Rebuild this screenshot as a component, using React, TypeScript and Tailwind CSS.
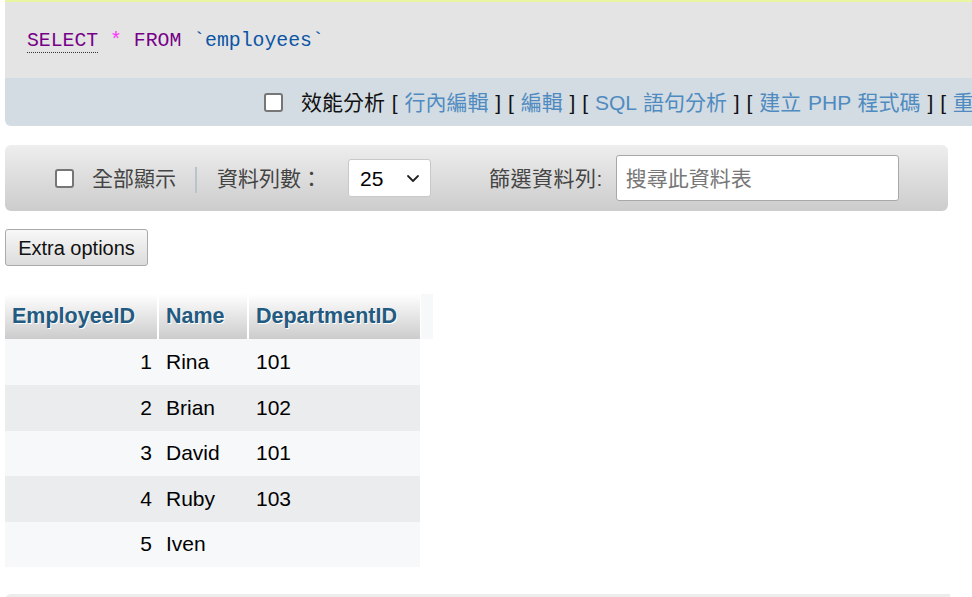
import React from "react";

const sans = { fontFamily: '"Liberation Sans", "Noto Sans CJK TC", Arial, sans-serif' };

function Box() {
  return <div className="w-[19px] h-[19px] shrink-0 rounded-[3px] border-2 border-[#767676] bg-white" />;
}

function Link({ children }: { children: React.ReactNode }) {
  return <span className="text-[#4f8bc0]">{children}</span>;
}

const rows = [
  { id: 1, name: "Rina", dep: "101", h: "h-[46px]" },
  { id: 2, name: "Brian", dep: "102", h: "h-[46px]" },
  { id: 3, name: "David", dep: "101", h: "h-[45px]" },
  { id: 4, name: "Ruby", dep: "103", h: "h-[46px]" },
  { id: 5, name: "Iven", dep: "", h: "h-[45px]" },
];

export default function App() {
  return (
    <div className="w-[972px] h-[597px] overflow-hidden bg-white pl-[5px] text-[21px] leading-none" style={sans}>
      {/* SQL panel */}
      <div className="w-[1000px] border-t-2 border-[#eaf5a2]">
        <div className="h-[76px] bg-[#e4e4e4] pl-[22px] pt-[4px] flex items-center">
          <span
            className="text-[19.8px] whitespace-pre"
            style={{ fontFamily: '"Liberation Mono", "DejaVu Sans Mono", monospace' }}
          >
            <span className="text-[#770088] underline decoration-dotted decoration-[#333] underline-offset-[6px] decoration-1">SELECT</span>
            <span> </span>
            <span className="text-[#ff33ff]">*</span>
            <span> </span>
            <span className="text-[#770088]">FROM</span>
            <span> </span>
            <span className="text-[#0b55a4]">`employees`</span>
          </span>
        </div>
        <div className="h-[48px] bg-[#d3dce3] rounded-bl-[6px] pl-[259px] flex items-center whitespace-nowrap text-[#111]">
          <Box />
          <span className="ml-[18px] whitespace-pre [word-spacing:1px]">
            效能分析 [ <Link>行內編輯</Link> ] [ <Link>編輯</Link> ] [ <Link>SQL 語句分析</Link> ] [ <Link>建立 PHP 程式碼</Link> ] [ <Link>重新整理</Link> ]
          </span>
        </div>
      </div>

      {/* Filter bar */}
      <div className="mt-[19px] w-[943px] h-[66px] rounded-[6px] bg-gradient-to-b from-[#eeeeee] to-[#cccccc] flex items-center pl-[50px] text-[#444] whitespace-nowrap">
        <Box />
        <span className="ml-[18px]">全部顯示</span>
        <span className="ml-[19px] w-[2px] h-[26px] bg-[#b8c4cc] mt-[4px]" />
        <span className="ml-[20px]">資料列數：</span>
        <div className="ml-[26px] w-[83px] h-[38px] rounded-[3px] border border-[#c8c8c8] bg-white flex items-center justify-between pl-[11px] pr-[10px] text-black">
          <span>25</span>
          <svg width="14" height="14" viewBox="0 0 14 14" fill="none">
            <path d="M2 5l5 5 5-5" stroke="#222" strokeWidth="1.8" strokeLinecap="round" strokeLinejoin="round" />
          </svg>
        </div>
        <span className="ml-[58px] tracking-[0.5px]">篩選資料列:</span>
        <div className="ml-[13px] w-[283px] h-[46px] rounded-[3px] border border-[#a8a8a8] bg-white flex items-center pl-[9px] text-[#777]">
          搜尋此資料表
        </div>
      </div>

      {/* Extra options */}
      <div className="mt-[18px]">
        <div className="inline-flex items-center justify-center w-[143px] h-[37px] rounded-[3px] border border-[#aaaaaa] bg-gradient-to-b from-[#f8f8f8] to-[#dcdcdc] text-[#111] text-[20px]">
          Extra options
        </div>
      </div>

      {/* Table */}
      <div className="mt-[28px] flex">
        <div className="w-[415px]">
          <div className="flex h-[45px] bg-gradient-to-b from-[#ffffff] to-[#cccccc] text-[#235a81] font-bold text-[21.5px]" style={{ textShadow: "1px 1px 0 #fff" }}>
            <div className="w-[154px] pl-[7px] flex items-center border-r-2 border-white">EmployeeID</div>
            <div className="w-[90px] pl-[7px] flex items-center border-r-2 border-white">Name</div>
            <div className="flex-1 pl-[7px] flex items-center">DepartmentID</div>
          </div>
          {rows.map((r, i) => (
            <div
              key={r.id}
              className={`flex ${r.h} text-black ${i % 2 === 0 ? "bg-[#f7f8fa]" : "bg-[#ebecee]"}`}
            >
              <div className="w-[154px] pr-[7px] pb-[2px] flex items-center justify-end">{r.id}</div>
              <div className="w-[90px] pl-[7px] pb-[2px] flex items-center">{r.name}</div>
              <div className="flex-1 pl-[7px] pb-[2px] flex items-center">{r.dep}</div>
            </div>
          ))}
        </div>
        <div className="ml-px w-[12px] h-[45px] bg-[#f7f8fa]" />
      </div>

      {/* Bottom panel */}
      <div className="mt-[27px] w-[945px] h-[10px] rounded-tl-[6px] bg-[#ececec]" />
    </div>
  );
}
